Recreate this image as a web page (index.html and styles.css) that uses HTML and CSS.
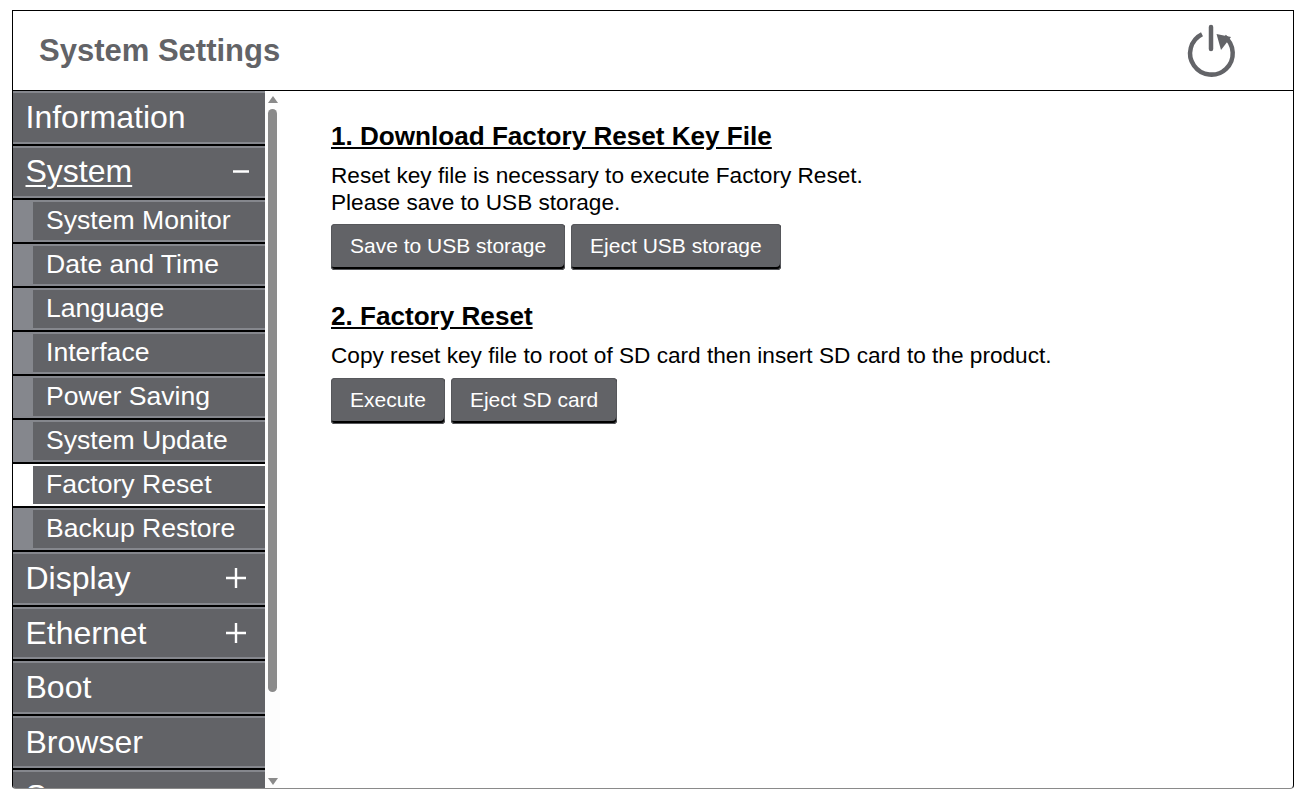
FILE: index.html
```html
<!DOCTYPE html>
<html lang="en">
<head>
<meta charset="utf-8">
<title>System Settings</title>
<link rel="stylesheet" href="styles.css">
</head>
<body>
<div class="frame">
  <header class="header">
    <h1 class="title">System Settings</h1>
    <svg class="power" viewBox="0 0 62 62" aria-hidden="true">
      <path class="power-stroke" d="M22 15.2A21.3 21.3 0 1 0 44.5 17.5"/>
      <path class="power-stroke power-bar" d="M31 8V30"/>
      <path class="power-head" d="M36.5 15L51 18L41 31Z"/>
    </svg>
  </header>
  <div class="body">
    <nav class="sidebar">
      <ul class="menu">
        <li class="top"><span class="top-in">Information</span></li>
        <li class="top"><span class="top-in"><span class="open">System</span><svg class="sign" viewBox="0 0 20 20" aria-hidden="true"><path d="M7 9.5H23"/></svg></span></li>
        <li class="sub"><span class="sub-in">System Monitor</span></li>
        <li class="sub"><span class="sub-in">Date and Time</span></li>
        <li class="sub"><span class="sub-in">Language</span></li>
        <li class="sub"><span class="sub-in">Interface</span></li>
        <li class="sub"><span class="sub-in">Power Saving</span></li>
        <li class="sub"><span class="sub-in">System Update</span></li>
        <li class="sub active"><span class="sub-in">Factory Reset</span></li>
        <li class="sub"><span class="sub-in">Backup Restore</span></li>
        <li class="top"><span class="top-in"><span>Display</span><svg class="sign" viewBox="0 0 20 20" aria-hidden="true"><path d="M0 10H20M10 0V20"/></svg></span></li>
        <li class="top"><span class="top-in"><span>Ethernet</span><svg class="sign" viewBox="0 0 20 20" aria-hidden="true"><path d="M0 10H20M10 0V20"/></svg></span></li>
        <li class="top"><span class="top-in">Boot</span></li>
        <li class="top"><span class="top-in">Browser</span></li>
        <li class="top"><span class="top-in">Server</span></li>
      </ul>
      <div class="rail">
        <span class="arrow-up"></span>
        <span class="thumb"></span>
        <span class="arrow-down"></span>
      </div>
    </nav>
    <main class="main">
      <h2 class="heading">1. Download Factory Reset Key File</h2>
      <p class="text">Reset key file is necessary to execute Factory Reset.<br>Please save to USB storage.</p>
      <div class="buttons">
        <button class="btn">Save to USB storage</button>
        <button class="btn">Eject USB storage</button>
      </div>
      <h2 class="heading second">2. Factory Reset</h2>
      <p class="text single">Copy reset key file to root of SD card then insert SD card to the product.</p>
      <div class="buttons">
        <button class="btn">Execute</button>
        <button class="btn">Eject SD card</button>
      </div>
    </main>
  </div>
  <div class="edge"></div>
</div>
</body>
</html>
```

FILE: styles.css
```css
* { box-sizing: border-box; }
html, body { margin: 0; height: 100%; background: #fff; }
body {
  padding: 10px 12px 8px;
  font-family: "Liberation Sans", Arial, sans-serif;
  overflow: hidden;
}
.frame {
  position: relative;
  width: 1282px;
  height: 779px;
  border: 1px solid #000;
  border-bottom: 1px solid #8a8a8a;
  border-radius: 0 0 4px 4px;
  overflow: hidden;
  display: flex;
  flex-direction: column;
}
.header {
  flex: none;
  height: 80px;
  border-bottom: 1px solid #000;
  padding: 0 57px 0 26px;
  display: flex;
  align-items: center;
  justify-content: space-between;
}
.title {
  margin: 0;
  font-size: 31px;
  font-weight: bold;
  color: #626367;
}
.power { width: 62px; height: 62px; margin-top: -1px; margin-right: -6px; }
.power-stroke { fill: none; stroke: #636468; stroke-width: 4.5; }
.power-bar { stroke-linecap: round; }
.power-head { fill: #636468; }
.body { flex: 1; min-height: 0; display: flex; }
.sidebar { flex: none; width: 267px; display: flex; overflow: hidden; }
.menu { flex: none; width: 252px; margin: 0; padding: 0; list-style: none; color: #fff; }
.top {
  height: 54.5px;
  padding: 2px 0;
  background: #85878d;
  border-bottom: 2px solid #000;
  font-size: 32px;
}
.top-in {
  height: 100%;
  display: flex;
  align-items: center;
  justify-content: space-between;
  padding: 0 19px 0 12.5px;
  background: #626367;
  line-height: 1;
}
.open { text-decoration: underline; text-decoration-thickness: 2px; text-underline-offset: 3px; margin-top: -1px; }
.sign { width: 20px; height: 20px; fill: none; stroke: #fff; stroke-width: 2.4; overflow: visible; }
.sub {
  height: 44px;
  padding: 2px 0 2px 20px;
  background: #85878d;
  border-bottom: 2px solid #000;
  font-size: 26.6px;
}
.sub.active { background: #fff; }
.sub-in {
  display: flex;
  align-items: center;
  height: 100%;
  padding: 0 0 2px 13px;
  background: #626367;
  line-height: 1;
}
.rail {
  flex: none;
  width: 15px;
  height: 100%;
  background: #fdfdfd;
  display: flex;
  flex-direction: column;
  align-items: center;
  padding-top: 5px;
}
.arrow-up, .arrow-down { width: 0; height: 0; border-left: 5px solid transparent; border-right: 5px solid transparent; }
.arrow-up { border-bottom: 7px solid #8a8a8a; }
.arrow-down { border-top: 7px solid #8a8a8a; margin-top: 86px; }
.thumb { width: 9px; height: 583px; margin-top: 6px; background: #8a8a8a; border-radius: 5px; }
.main { flex: 1; padding: 30px 0 0 51px; color: #000; }
.heading { margin: 0 0 11px; font-size: 26.1px; font-weight: bold; line-height: 30px; text-decoration: underline; }
.heading.second { margin-top: 31px; margin-bottom: 11px; }
.text { margin: 0 0 8px; font-size: 22.64px; line-height: 27px; }
.text.single { margin-bottom: 9px; }
.buttons { display: flex; gap: 6px; }
.btn {
  height: 46px;
  padding: 0 19px 2px;
  font: 21px "Liberation Sans", Arial, sans-serif;
  color: #fff;
  background: #626367;
  border: 0;
  border-radius: 4px;
  box-shadow: inset 0 0 0 1px #56575b, inset -1px -3px 0 #000;
}
.edge {
  position: absolute;
  left: 842px;
  right: 2px;
  bottom: -1px;
  height: 1px;
  background: repeating-linear-gradient(90deg, #66727a 0 5px, #c4c8ca 5px 8px);
}
```
